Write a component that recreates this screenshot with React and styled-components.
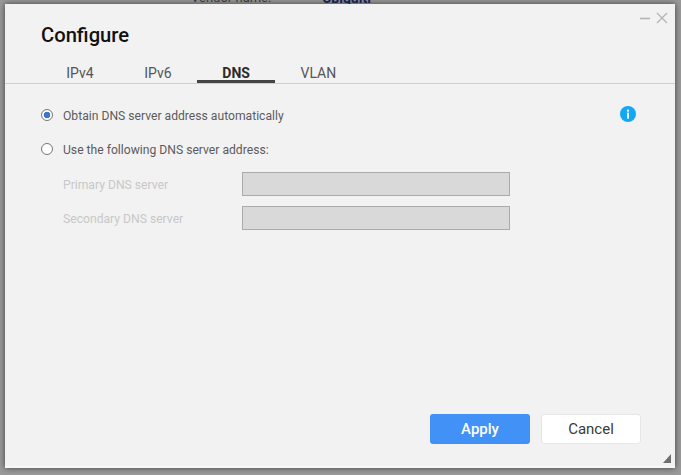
import React from "react";
import styled, { createGlobalStyle } from "styled-components";

const GlobalStyle = createGlobalStyle`
  html, body {
    margin: 0;
    padding: 0;
    background: #9a9a9a;
  }
  body {
    font-family: Roboto, "Liberation Sans", sans-serif;
  }
`;

const tabs = ["IPv4", "IPv6", "DNS", "VLAN"];

function App() {
  return (
    <Page>
      <GlobalStyle />
      <BehindRow>
        <VendorLabel>Vendor name:</VendorLabel>
        <VendorValue>Ubiquiti</VendorValue>
      </BehindRow>
      <Dialog>
        <WindowControls>
          <svg width="34" height="14" viewBox="0 0 34 14" fill="none" stroke="#b5b5b5">
            <path d="M1 7.5H11" strokeWidth="1.6" />
            <path d="M18 2L28 12M28 2L18 12" strokeWidth="1.4" />
          </svg>
        </WindowControls>
        <Title>Configure</Title>
        <TabBar>
          {tabs.map((tab) => (
            <Tab key={tab} $active={tab === "DNS"}>
              {tab}
            </Tab>
          ))}
        </TabBar>
        <Body>
          <OptionRow>
            <Radio $checked />
            <OptionLabel>Obtain DNS server address automatically</OptionLabel>
            <InfoIcon>
              <svg width="16" height="16" viewBox="0 0 16 16">
                <circle cx="8" cy="8" r="8" fill="#12a8f5" />
                <rect x="7" y="6.6" width="2" height="6" fill="#fff" />
                <rect x="7" y="3.6" width="2" height="2" fill="#fff" />
              </svg>
            </InfoIcon>
          </OptionRow>
          <OptionRow>
            <Radio />
            <OptionLabel>Use the following DNS server address:</OptionLabel>
          </OptionRow>
          <Fields>
            <FieldRow>
              <FieldLabel>Primary DNS server</FieldLabel>
              <FieldInput disabled />
            </FieldRow>
            <FieldRow>
              <FieldLabel>Secondary DNS server</FieldLabel>
              <FieldInput disabled />
            </FieldRow>
          </Fields>
        </Body>
        <Footer>
          <ApplyButton>Apply</ApplyButton>
          <CancelButton>Cancel</CancelButton>
        </Footer>
        <ResizeGrip>
          <svg width="8" height="9" viewBox="0 0 8 9">
            <path d="M8 0V9H0Z" fill="#6f6f6f" />
          </svg>
        </ResizeGrip>
      </Dialog>
    </Page>
  );
}

export default App;

const Page = styled.div`
  position: relative;
  width: 681px;
  height: 475px;
  overflow: hidden;
  padding: 4px 6px 7px 5px;
  box-sizing: border-box;
  background: #9a9a9a;
`;

const BehindRow = styled.div`
  position: absolute;
  top: -10px;
  left: 191px;
  display: flex;
  gap: 51px;
  font-size: 13px;
  line-height: 16px;
`;

const VendorLabel = styled.span`
  color: #3c3c3c;
`;

const VendorValue = styled.span`
  color: #14205a;
  font-weight: 700;
  font-size: 14px;
`;

const Dialog = styled.div`
  position: relative;
  height: 100%;
  display: flex;
  flex-direction: column;
  background: #f2f2f2;
  box-shadow: 0 0 6px rgba(40, 40, 40, 0.8), inset 0 -2px 0 #f8f8f8;
`;

const WindowControls = styled.div`
  position: absolute;
  top: 7px;
  right: 2px;
  display: flex;
  height: 14px;
`;

const Title = styled.h1`
  margin: 0;
  padding: 19px 0 0 36px;
  font-size: 20.2px;
  line-height: 24px;
  font-weight: 500;
  color: #111;
`;

const TabBar = styled.div`
  display: flex;
  margin-top: 16px;
  padding-left: 36px;
  height: 21px;
  box-sizing: border-box;
  border-bottom: 1px solid #cfcfcf;
`;

const Tab = styled.div`
  height: 20px;
  padding: 0 25.3px;
  box-sizing: border-box;
  font-size: 14px;
  line-height: 20px;
  color: ${(p) => (p.$active ? "#2b2b2b" : "#555")};
  font-weight: ${(p) => (p.$active ? 700 : 400)};
  border-bottom: ${(p) => (p.$active ? "3px solid #444" : "none")};
`;

const Body = styled.div`
  flex: 1;
  display: flex;
  flex-direction: column;
  padding: 24px 39px 0 36px;
  gap: 18px;
`;

const OptionRow = styled.div`
  display: flex;
  align-items: center;
  height: 16px;
  font-size: 12.15px;
`;

const Radio = styled.span`
  width: 12px;
  height: 12px;
  box-sizing: border-box;
  border: 1px solid #777;
  border-radius: 50%;
  background: ${(p) =>
    p.$checked
      ? "radial-gradient(circle, #3f74c9 0, #3f74c9 3px, #fff 3.6px)"
      : "#fff"};
  margin-right: 10px;
  margin-top: -3px;
`;

const OptionLabel = styled.span`
  color: #5c5c5c;
`;

const InfoIcon = styled.span`
  margin-left: auto;
  margin-top: -4px;
  display: flex;
`;

const Fields = styled.div`
  display: flex;
  flex-direction: column;
  gap: 10px;
  margin-top: -4px;
`;

const FieldRow = styled.div`
  display: flex;
  align-items: center;
`;

const FieldLabel = styled.span`
  width: 201px;
  padding: 2px 0 0 22px;
  box-sizing: border-box;
  font-size: 12.15px;
  color: #c8c8c8;
`;

const FieldInput = styled.input`
  width: 268px;
  height: 24px;
  box-sizing: border-box;
  padding: 0;
  background: #d9d9d9;
  border: 1px solid #ababab;
  border-radius: 0;
`;

const Footer = styled.div`
  display: flex;
  justify-content: flex-end;
  gap: 11px;
  padding: 0 34px 24px 0;
`;

const ApplyButton = styled.button`
  width: 100px;
  height: 30px;
  border: none;
  border-radius: 3px;
  background: #4191f7;
  color: #fff;
  font-family: Roboto, sans-serif;
  font-weight: 500;
  font-size: 15px;
  padding: 0;
`;

const CancelButton = styled.button`
  width: 100px;
  height: 30px;
  border: 1px solid #e6e6e6;
  border-radius: 3px;
  background: #fff;
  color: #3a3a3a;
  font-family: Roboto, sans-serif;
  font-size: 15px;
  padding: 0;
`;

const ResizeGrip = styled.div`
  position: absolute;
  right: 4px;
  bottom: 5px;
  display: flex;
`;
